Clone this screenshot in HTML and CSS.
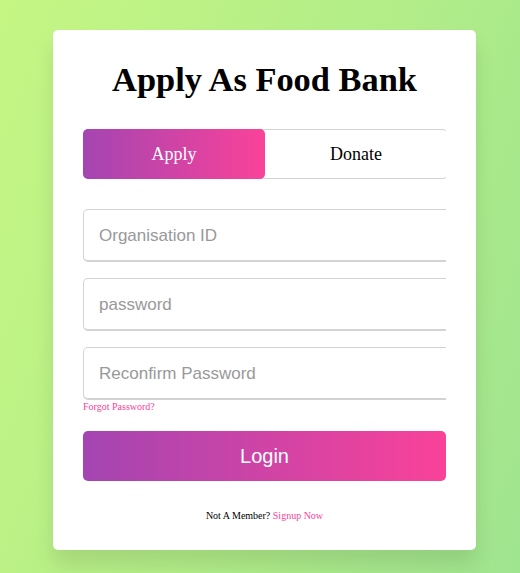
FILE: index.html
```html
<!DOCTYPE html>
<html lang="en">
<head>
<meta charset="utf-8">
<title>Apply As Food Bank</title>
<link rel="stylesheet" href="styles.css">
</head>
<body>
<div class="card">
  <h1 class="title">Apply As Food Bank</h1>
  <div class="inner">
    <div class="toggle">
      <div class="tab tab-active">Apply</div>
      <div class="tab">Donate</div>
    </div>
    <form class="form">
      <div class="field"><input type="text" placeholder="Organisation ID"></div>
      <div class="field"><input type="password" placeholder="password"></div>
      <div class="field"><input type="password" placeholder="Reconfirm Password"></div>
      <div class="pass-link"><a href="#">Forgot Password?</a></div>
      <button type="button" class="login">Login</button>
      <div class="signup-link">Not A Member? <a href="#">Signup Now</a></div>
    </form>
  </div>
</div>
</body>
</html>
```
FILE: styles.css
```css
html, body {
  margin: 0;
  padding: 0;
}
body {
  min-height: 573px;
  background: linear-gradient(110deg, #c5f684 0%, #b2ed88 55%, #9fe48f 100%);
  font-family: "Liberation Serif", "Times New Roman", serif;
  overflow: hidden;
}
.card {
  box-sizing: border-box;
  width: 423px;
  margin: 30px 0 0 53px;
  padding: 30px 30px 28px 30px;
  background: #fff;
  border-radius: 5px;
  box-shadow: 0 15px 20px rgba(0, 0, 0, 0.1);
}
.title {
  margin: 0;
  font-size: 34.4px;
  font-weight: 700;
  line-height: 38px;
  text-align: center;
  color: #000;
}
.inner {
  overflow: hidden;
}
.toggle {
  box-sizing: border-box;
  display: flex;
  width: calc(100% + 2px);
  height: 50px;
  margin-top: 31px;
  border: 1px solid lightgrey;
  border-radius: 5px;
}
.tab {
  flex: 1;
  text-align: center;
  font-size: 18px;
  line-height: 48px;
  color: #000;
}
.tab-active {
  margin: -1px 0 -1px -1px;
  line-height: 50px;
  color: #fff;
  border-radius: 5px;
  background: linear-gradient(to right, #a445b2, #fa4299);
}
.form {
  margin: 0;
  padding-top: 14px;
}
.field {
  height: 53px;
  margin-top: 16px;
}
.field input {
  box-sizing: border-box;
  width: calc(100% + 20px);
  height: 100%;
  margin: 0;
  padding: 2px 0 0 15px;
  border: 1px solid lightgrey;
  border-bottom-width: 2px;
  border-radius: 5px;
  outline: none;
  font-family: "Liberation Sans", Arial, sans-serif;
  font-size: 17px;
  color: #333;
  background: #fff;
}
.field input::placeholder {
  color: #999;
}
.pass-link {
  padding-top: 1px;
  font-size: 10px;
  line-height: 12px;
}
.pass-link a,
.signup-link a {
  color: #fa4299;
  text-decoration: none;
}
.login {
  display: block;
  width: 100%;
  height: 50px;
  margin-top: 18px;
  padding: 0;
  border: none;
  border-radius: 5px;
  background: linear-gradient(to right, #a445b2, #fa4299);
  color: #fff;
  font-family: "Liberation Sans", Arial, sans-serif;
  font-size: 20px;
}
.signup-link {
  margin-top: 29px;
  font-size: 10px;
  line-height: 12px;
  text-align: center;
  color: #000;
}
```
